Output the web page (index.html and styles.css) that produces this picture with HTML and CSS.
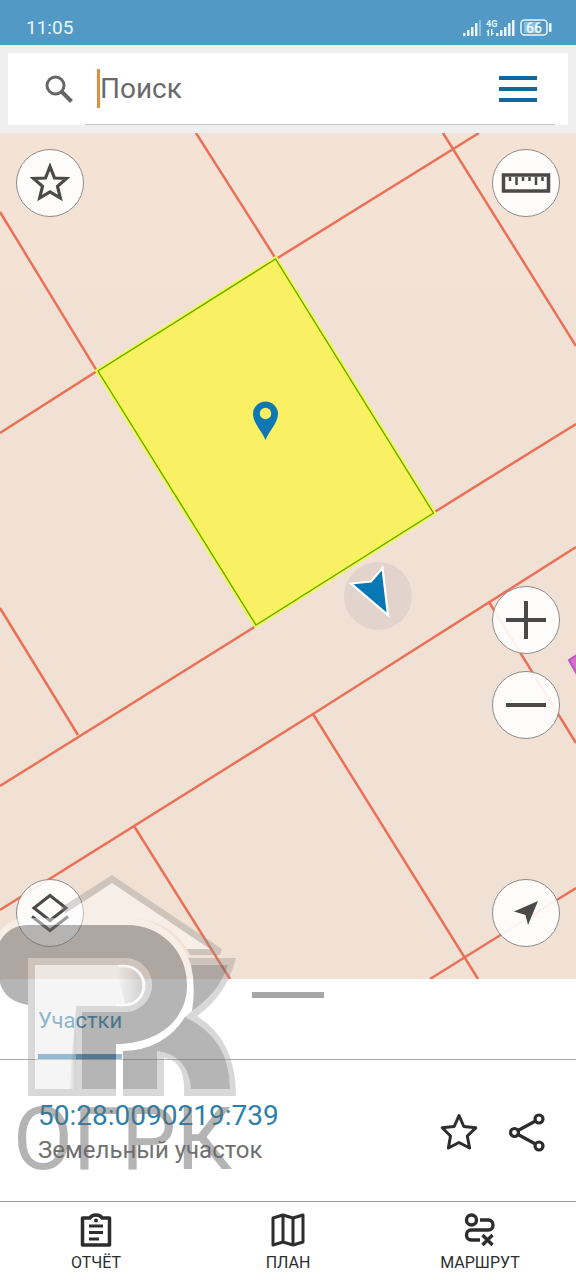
FILE: index.html
```html
<!DOCTYPE html>
<html lang="ru">
<head>
    <meta charset="UTF-8">
    <meta name="viewport" content="width=device-width, initial-scale=1">
    <title>Карта - Земельный участок</title>
    <link rel="stylesheet" href="styles.css">
</head>
<body>

    <div class="status-bar">
        <span>11:05</span>
        <svg width="90" height="20" viewBox="0 0 90 20" fill="#e8f7ff">
            <path d="M0 15h2.500v3H0zM4 12h2.500v6H4zM8 9h2.500v9H8zM12 5h2.500v13h-2.500z"/>
            <path d="M16 2h2v16h-2z" opacity=".4"/>
            <text x="23" y="9" class="net">4G</text>
            <path d="M23 14l3-3v7h-1.500v-4zM28 11h1.500v4h2l-3.500 3zM33 15h2.500v3H33zM37 12h2.500v6H37zM41 9h2.500v9H41zM45 5h2.500v13H45zM49 2h2.500v16H49z"/>
            <rect x="58" y="2" width="26" height="15" rx="3.500" fill="#5299c5" stroke="#e8f7ff" stroke-width="1.500"/>
            <rect x="61" y="4" width="14" height="11" fill="#8fc1de"/>
            <rect x="86" y="5" width="2.500" height="9" rx="1"/>
            <text x="71" y="15" text-anchor="middle" class="charge">66</text>
        </svg>
    </div>

    <header class="search">
        <div class="search-box">
            <label class="search-icon" for="query" aria-label="Поиск">
                <svg width="28" height="28" viewBox="0 0 28 28" fill="none" stroke="#666" stroke-width="3">
                    <circle cx="10.500" cy="10.500" r="8.500"/>
                    <path d="M17 17l9.500 9.500" stroke-width="4"/>
                </svg>
            </label>
            <div class="search-field">
                <input type="text" id="query" placeholder="Поиск">
                <button class="menu" type="button" aria-label="Меню">
                    <svg width="38" height="26" viewBox="0 0 38 26" fill="#11679c">
                        <path d="M0 0h38v4H0zM0 11h38v4H0zM0 22h38v4H0z"/>
                    </svg>
                </button>
            </div>
        </div>
    </header>

    <main class="map">
        <svg class="parcels" viewBox="0 133 576 846" preserveAspectRatio="xMidYMid slice">
            <rect y="133" width="576" height="155" fill="#f4e3d4"/>
            <path class="borders" d="M0 212L97 371L0 433M196 133L276 259L479 133M443 133L576 346M0 608L78 735M0 786L256 626M433 513L576 424M0 910L313 714L576 547M134 826L230 979M313 714L478 979M430 979L576 888M489 602L576 743"/>
            <path d="M569 660L580 653V680z" fill="#d56fcb" stroke="#bf55b8" stroke-width="2"/>
            <path d="M275.500 259L98 371L256 625L433.500 513z" fill="#f9f063" stroke="#f4f94f" stroke-width="5"/>
            <path d="M275.500 259L98 371L256 625L433.500 513z" fill="none" stroke="#69a800" stroke-width="1.400"/>
            <!-- метка участка -->
            <path d="M265.500 440C262 431 253 423 253 414a12.500 12.500 0 0 1 25 0C278 423 269 431 265.500 440z" fill="#0f78b3"/>
            <circle cx="265.500" cy="413.500" r="5.700" fill="#f9f063"/>
            <!-- текущее положение -->
            <circle cx="378" cy="596" r="34" fill="#b9aeb4" opacity=".25"/>
            <path d="M351 583.500L371 581.500L382.500 568L388 615z" fill="#0777b5" stroke="#fff" stroke-width="2.200"/>
        </svg>

        <div class="controls">
            <button class="round" type="button" aria-label="Избранное">
                <svg width="40" height="40" viewBox="0 0 40 40" fill="none" stroke="#4a4a4a" stroke-width="3.200">
                    <path d="M20 3.500L24.500 15L36.500 15.500L27.500 23.300L30.300 35L20 28.800L9.700 35L12.500 23.300L3.500 15.500L15.500 15z"/>
                </svg>
            </button>
            <button class="round" type="button" aria-label="Слои">
                <svg width="40" height="40" viewBox="0 0 40 40" fill="none" stroke="#4a4a4a" stroke-width="3">
                    <path d="M20 2.500L36 15L20 27.500L4 15zM2 23.500L20 37.500L38 23.500"/>
                </svg>
            </button>
        </div>

        <div class="controls">
            <button class="round" type="button" aria-label="Линейка">
                <svg width="50" height="20" viewBox="0 0 50 20" fill="none" stroke="#4a4a4a">
                    <rect x="2.500" y="2" width="45" height="16" stroke-width="3.500"/>
                    <path d="M9 4v4M15.500 4v8M22 4v4M28.500 4v4M35 4v8M41.500 4v4" stroke-width="2.500"/>
                </svg>
            </button>
            <div class="zoom">
                <button class="round" type="button" aria-label="Приблизить">
                    <svg width="40" height="40" viewBox="0 0 40 40" stroke="#4a4a4a" stroke-width="4">
                        <path d="M0 20h40M20 1v38"/>
                    </svg>
                </button>
                <button class="round" type="button" aria-label="Отдалить">
                    <svg width="40" height="40" viewBox="0 0 40 40" stroke="#4a4a4a" stroke-width="4">
                        <path d="M0 20h40"/>
                    </svg>
                </button>
            </div>
            <button class="round" type="button" aria-label="Моё местоположение">
                <svg width="24" height="24" viewBox="0 0 24 24" fill="#4a4a4a">
                    <path d="M24 0L14 24L11.500 14L0 10.500z"/>
                </svg>
            </button>
        </div>
    </main>

    <section class="sheet">
        <div class="handle"></div>
        <div class="tabs">
            <button class="tab" type="button">Участки</button>
        </div>
        <div class="parcel">
            <div class="parcel-info">
                <a href="#parcel">50:28:0090219:739</a>
                <p>Земельный участок</p>
            </div>
            <button class="action" type="button" aria-label="В избранное">
                <svg width="40" height="40" viewBox="0 0 40 40" fill="none" stroke="#2d2d2d" stroke-width="3" stroke-linejoin="round">
                    <path d="M20 3.500L24.800 14.500L36.800 15.800L28.300 24L30.600 36L20 30.500L9.400 36L11.500 24L3.200 15.800L15.200 14.500z"/>
                </svg>
            </button>
            <button class="action" type="button" aria-label="Поделиться">
                <svg width="40" height="40" viewBox="0 0 40 40" fill="none" stroke="#2d2d2d" stroke-width="3.200">
                    <circle cx="7.500" cy="20.500" r="4"/>
                    <circle cx="32" cy="7" r="4"/>
                    <circle cx="32" cy="34" r="4"/>
                    <path d="M11 18.500L28.500 9M11 22.500L28.500 32"/>
                </svg>
            </button>
        </div>
    </section>

    <nav class="bottom-nav">
        <a href="#report">
            <svg width="36" height="36" viewBox="0 0 36 36" fill="none" stroke="#2d2d2d" stroke-width="3.500" stroke-linejoin="round">
                <path d="M4.500 6H12C13 4 15 3 18 3S23 4 24 6H31.500V33H4.500z"/>
                <path d="M11 14h14M11 20.500h14M11 27h10" stroke-width="3"/>
                <circle cx="18" cy="8.500" r="2" fill="#2d2d2d" stroke="none"/>
            </svg>
            ОТЧЁТ
        </a>
        <a href="#plan">
            <svg width="36" height="36" viewBox="0 0 36 36" fill="none" stroke="#2d2d2d" stroke-width="3" stroke-linejoin="round">
                <path d="M3 6L13 3L23 6L33 3V30L23 33L13 30L3 33zM13 3V30M23 6V33"/>
            </svg>
            ПЛАН
        </a>
        <a href="#route">
            <svg width="36" height="36" viewBox="0 0 36 36" fill="none" stroke="#2d2d2d" stroke-width="3.400">
                <circle cx="9.500" cy="8" r="5"/>
                <path d="M18 8h8.500a4.500 5 0 0 1 0 10H9a4.500 5 0 0 0 0 10h9M20.500 23l10 10M30.500 23l-10 10"/>
            </svg>
            МАРШРУТ
        </a>
    </nav>

    <svg class="watermark" width="240" height="320" viewBox="0 860 240 320">
        <defs>
            <linearGradient id="fold">
                <stop offset="0" stop-color="#777" stop-opacity="0"/>
                <stop offset="1" stop-color="#777" stop-opacity=".3"/>
            </linearGradient>
        </defs>
        <!-- крыша -->
        <path d="M112 883L210 949H187Q168 918 127 918H62L66 913z" class="glow"/>
        <path d="M112 875L222 949L220 955H190L187 949H210L112 883L66 913L60 908z" class="edge"/>
        <!-- буква Р -->
        <path d="M0 931Q10 918 28 918H127C165 918 194 948 194 985C194 1023 164 1050 123 1051V1096H116V1044C157 1044 187 1021 187 985C187 951 161 925 127 925H28Q10 925 0 941z" class="glow"/>
        <path d="M0 941Q10 925 28 925H127C161 925 187 951 187 985C187 1021 157 1044 116 1044V1089H82V1012H125A27 27 0 0 0 125 958H28V1005Q5 1001 0 983z" class="fill"/>
        <path d="M28 958H125A27 27 0 0 1 125 1012H82V1096H28zM35 965V1089H76V1006H125A20 20 0 0 0 125 965z" fill-rule="evenodd" class="edge"/>
        <path d="M35 965H125A20 20 0 0 1 125 1006H76V1089H35z" class="panel"/>
        <path d="M116 967H125A18 18 0 0 1 125 1004z" fill="url(#fold)"/>
        <path d="M118 966H124A19 19 0 0 1 124 1005H116" fill="none" stroke="#fff" stroke-width="2.500" opacity=".8"/>
        <path d="M69 1089L76 1010V1089z" fill="url(#fold)"/>
        <path d="M82 1089H116V1096H82z" class="edge"/>
        <!-- буква К -->
        <path d="M191 965H228Q219 993 192 1011Q196 987 191 965zM185 1017Q230 1038 230 1089H191Q188 1055 157 1051V1089H123V1051Q164 1050 185 1017z" class="fill"/>
        <path d="M188 958H236Q226 996 197 1016Q236 1040 236 1096H184Q186 1060 164 1058V1096H123V1089H157V1051Q188 1055 191 1089H230Q230 1038 185 1017L192 1011Q219 993 228 965H191z" class="edge"/>
        <text x="13" y="1169">ОГРК</text>
    </svg>

</body>
</html>
```
FILE: styles.css
```css
* {
    box-sizing: border-box;
}

body {
    position: relative;
    display: flex;
    flex-direction: column;
    min-height: 100vh;
    margin: 0;
    font-family: Roboto, "Noto Sans", sans-serif;
    background-color: #fff;
    color: #2d2d2d;
}

button {
    display: flex;
    align-items: center;
    justify-content: center;
    padding: 0;
    border: none;
    background: none;
    font-family: inherit;
    cursor: pointer;
}

.status-bar {
    display: flex;
    align-items: center;
    justify-content: space-between;
    height: 45px;
    padding: 10px 23px 0 26px;
    background-color: #5299c5;
    color: #e8f7ff;
    font-size: 19px;
}

.net {
    font-size: 9px;
    font-weight: bold;
}

.charge {
    font-size: 14px;
    font-weight: 500;
}

.search {
    padding: 8px;
    background-color: #efefef;
}

.search-box {
    display: flex;
    height: 72px;
    background-color: #fff;
}

.search-icon {
    display: flex;
    align-items: center;
    justify-content: flex-end;
    width: 77px;
    padding-right: 12px;
}

.search-field {
    display: flex;
    flex: 1;
    align-items: center;
    justify-content: space-between;
    margin-right: 13px;
    padding: 0 18px 0 12px;
    border-bottom: 1px solid #c4c4c4;
}

.search-field input {
    flex: 1;
    min-width: 0;
    height: 39px;
    padding: 0;
    border: none;
    border-left: 3px solid #df8f3f;
    outline: none;
    font-family: inherit;
    font-size: 28px;
    color: #555;
}

.search-field input::placeholder {
    color: #6a6a6a;
    opacity: 1;
}

.map {
    position: relative;
    display: flex;
    flex: 1;
    justify-content: space-between;
    min-height: 500px;
    padding: 16px 16px 32px;
    background-color: #f0e1d4;
    overflow: hidden;
}

.parcels {
    position: absolute;
    top: 0;
    left: 0;
    width: 100%;
    height: 100%;
}

.borders {
    fill: none;
    stroke: #ea7157;
    stroke-width: 2.5;
}

.controls {
    position: relative;
    display: flex;
    flex-direction: column;
    justify-content: space-between;
}

.round {
    width: 68px;
    height: 68px;
    border: 1px solid #8f8b88;
    border-radius: 50%;
    background-color: rgba(255, 255, 255, 0.9);
}

.zoom {
    display: flex;
    flex-direction: column;
    gap: 17px;
    margin: auto 0 140px;
}

.handle {
    width: 72px;
    height: 6px;
    margin: 13px auto 0;
    background-color: #a6a6a6;
}

.tabs {
    display: flex;
    height: 62px;
    padding-left: 38px;
    border-bottom: 1px solid #aaa;
}

.tab {
    padding-bottom: 12px;
    border-bottom: 5px solid #3d87b8;
    color: #2b7fac;
    font-size: 22px;
}

.parcel {
    display: flex;
    align-items: center;
    height: 141px;
    padding: 2px 29px 0 38px;
}

.parcel-info {
    flex: 1;
}

.parcel-info a {
    color: #2b7fac;
    font-size: 28px;
    line-height: 36px;
    text-decoration: none;
}

.parcel-info p {
    margin: 0;
    color: #707070;
    font-size: 24px;
    line-height: 32px;
}

.action {
    margin-left: 28px;
}

.bottom-nav {
    display: flex;
    height: 79px;
    border-top: 1px solid #999;
}

.bottom-nav a {
    display: flex;
    flex: 1;
    flex-direction: column;
    align-items: center;
    gap: 3px;
    padding-top: 10px;
    color: #2d2d2d;
    font-size: 16px;
    line-height: 24px;
    text-decoration: none;
}

.watermark {
    position: absolute;
    left: 0;
    bottom: 100px;
    overflow: visible;
    pointer-events: none;
}

.watermark text {
    font-size: 87px;
    fill: #6b6b6b;
    opacity: 0.5;
}

.fill {
    fill: #6b6b6b;
    opacity: 0.5;
}

.edge {
    fill: #8f8f8f;
    opacity: 0.35;
}

.glow {
    fill: #fff;
    opacity: 0.45;
}

.panel {
    fill: #ececec;
    opacity: 0.5;
}
```
